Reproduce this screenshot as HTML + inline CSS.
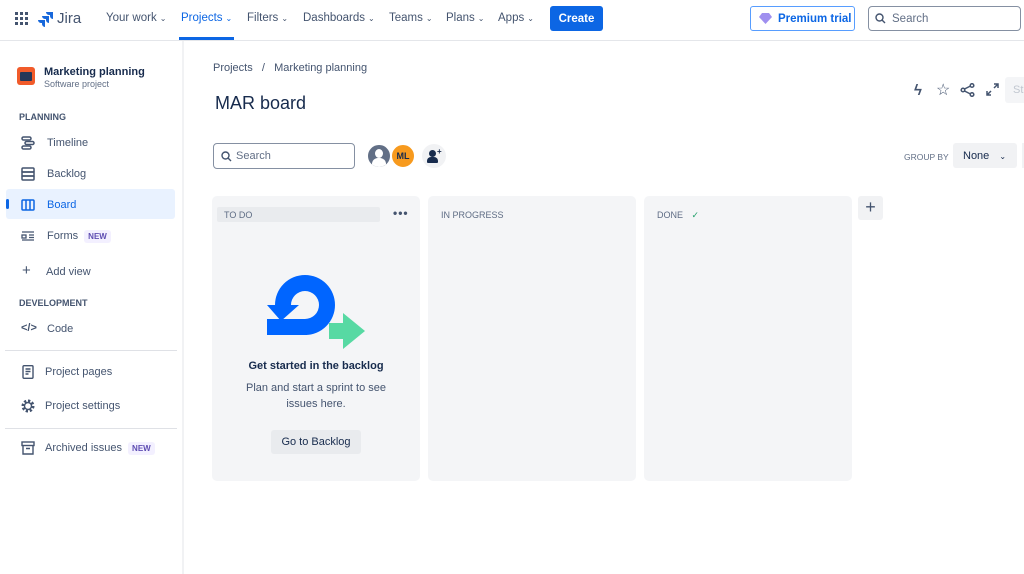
<!DOCTYPE html>
<html><head><meta charset="utf-8"><style>
*{box-sizing:border-box;margin:0;padding:0}
body{width:1024px;height:574px;overflow:hidden;background:#fff;font-family:"Liberation Sans",sans-serif;color:#172b4d;position:relative}
.a{position:absolute}
.nav{font-size:11.5px;color:#44546f;top:12px}
.car{font-size:8px;margin-left:3px}
.side{font-size:11px;color:#44546f}
.ico{position:absolute;left:21px;width:14px;height:14px}
.col{position:absolute;top:196px;width:208px;height:285px;background:#f4f5f7;border-radius:5px}
.ch{position:absolute;top:14px;font-size:9px;color:#5e6c84}
.badge{background:#f3f0ff;color:#5e4db2;font-size:8px;font-weight:bold;padding:2px 4px;border-radius:3px;margin-left:6px}
</style></head><body>
<div class="a" style="left:0;top:40px;width:1024px;height:1px;background:#e4e6ea"></div>
<svg class="a" style="left:15px;top:12px" width="13" height="13"><g fill="#44546f"><rect x="0" y="0" width="3" height="3"/><rect x="5" y="0" width="3" height="3"/><rect x="10" y="0" width="3" height="3"/><rect x="0" y="5" width="3" height="3"/><rect x="5" y="5" width="3" height="3"/><rect x="10" y="5" width="3" height="3"/><rect x="0" y="10" width="3" height="3"/><rect x="5" y="10" width="3" height="3"/><rect x="10" y="10" width="3" height="3"/></g></svg>
<svg class="a" style="left:38px;top:11px" width="16" height="16"><path d="M15 1H8a3 3 0 0 0 3 3h1v1a3 3 0 0 0 3 3z" fill="#1868db"/><path d="M11 5H4a3 3 0 0 0 3 3h1v1a3 3 0 0 0 3 3z" fill="#1868db"/><path d="M7 9H0a3 3 0 0 0 3 3h1v1a3 3 0 0 0 3 3z" fill="#1868db"/></svg>
<div class="a" style="left:57px;top:10px;font-size:15px;color:#44546f">Jira</div>
<div class="a nav" style="left:106px">Your work<span class="car">⌄</span></div>
<div class="a nav" style="left:181px;color:#0c66e4">Projects<span class="car">⌄</span></div>
<div class="a" style="left:179px;top:37px;width:55px;height:3px;background:#0c66e4"></div>
<div class="a nav" style="left:247px">Filters<span class="car">⌄</span></div>
<div class="a nav" style="left:303px">Dashboards<span class="car">⌄</span></div>
<div class="a nav" style="left:389px">Teams<span class="car">⌄</span></div>
<div class="a nav" style="left:446px">Plans<span class="car">⌄</span></div>
<div class="a nav" style="left:498px">Apps<span class="car">⌄</span></div>
<div class="a" style="left:550px;top:6px;width:53px;height:25px;background:#0c66e4;border-radius:3px;color:#fff;font-size:11.5px;font-weight:bold;text-align:center;line-height:26px">Create</div>
<div class="a" style="left:750px;top:6px;width:105px;height:25px;border:1px solid #579dff;border-radius:3px;color:#0c66e4;font-size:11.5px;font-weight:bold;line-height:24px;padding-left:27px">Premium trial</div>
<svg class="a" style="left:759px;top:13px" width="13" height="11"><path d="M3 0h7l3 4-6.5 7L0 4z" fill="#9f8fef"/></svg>
<div class="a" style="left:868px;top:6px;width:153px;height:25px;border:1px solid #8590a2;border-radius:4px;color:#626f86;font-size:11.5px;line-height:24px;padding-left:23px">Search</div>
<svg class="a" style="left:875px;top:13px" width="11" height="11"><circle cx="4.5" cy="4.5" r="3.5" stroke="#44546f" stroke-width="1.4" fill="none"/><path d="M7 7l3 3" stroke="#44546f" stroke-width="1.4"/></svg>
<div class="a" style="left:182px;top:41px;width:2px;height:533px;background:#f1f2f4"></div>
<div class="a" style="left:17px;top:67px;width:18px;height:18px;background:#f15b2a;border-radius:3px"></div>
<div class="a" style="left:20px;top:72px;width:12px;height:9px;background:#253858;border-radius:1px"></div>
<div class="a" style="left:44px;top:66px;font-size:11px;font-weight:bold">Marketing planning</div>
<div class="a" style="left:44px;top:79px;font-size:9px;color:#626f86">Software project</div>
<div class="a" style="left:19px;top:112px;font-size:9px;font-weight:bold;color:#44546f">PLANNING</div>
<div class="a" style="left:6px;top:189px;width:169px;height:30px;background:#e9f2ff;border-radius:3px"></div>
<div class="a" style="left:6px;top:199px;width:3px;height:10px;background:#0c66e4;border-radius:2px"></div>
<svg class="ico" style="top:136px" viewBox="0 0 14 14" fill="none" stroke="#44546f" stroke-width="1.5"><rect x="1" y="1" width="9" height="3" rx="1.5"/><rect x="4" y="5.5" width="9" height="3" rx="1.5"/><rect x="1" y="10" width="9" height="3" rx="1.5"/></svg>
<div class="a side" style="left:47px;top:137px">Timeline</div>
<svg class="ico" style="top:167px" viewBox="0 0 14 14" fill="none" stroke="#44546f" stroke-width="1.5"><rect x="1" y="1" width="12" height="4" rx="1"/><rect x="1" y="5" width="12" height="4"/><rect x="1" y="9" width="12" height="4" rx="1"/></svg>
<div class="a side" style="left:47px;top:168px">Backlog</div>
<svg class="ico" style="top:198px" viewBox="0 0 14 14" fill="none" stroke="#0c66e4" stroke-width="1.5"><rect x="1" y="2" width="12" height="10" rx="1"/><path d="M5 2v10M9 2v10"/></svg>
<div class="a side" style="left:47px;top:199px;color:#0c66e4">Board</div>
<svg class="ico" style="top:229px" viewBox="0 0 14 14" fill="none" stroke="#44546f" stroke-width="1.3"><path d="M1 3h12M1 11h12M8 6h5M8 8.5h5"/><rect x="1" y="6" width="4" height="3"/></svg>
<div class="a side" style="left:47px;top:230px">Forms<span class="badge">NEW</span></div>
<div class="a" style="left:22px;top:262px;font-size:15px;color:#44546f">+</div>
<div class="a side" style="left:46px;top:266px">Add view</div>
<div class="a" style="left:19px;top:298px;font-size:9px;font-weight:bold;color:#44546f">DEVELOPMENT</div>
<div class="a" style="left:21px;top:322px;font-size:11px;color:#44546f;font-weight:bold">&lt;/&gt;</div>
<div class="a side" style="left:47px;top:323px">Code</div>
<div class="a" style="left:5px;top:350px;width:172px;height:1px;background:#dfe1e6"></div>
<svg class="ico" style="top:365px" viewBox="0 0 14 14" fill="none" stroke="#44546f" stroke-width="1.4"><rect x="2" y="0.7" width="10" height="12.6" rx="1"/><path d="M4.5 4h5M4.5 6.5h5M4.5 9h3"/></svg>
<div class="a side" style="left:45px;top:366px">Project pages</div>
<svg class="ico" style="top:399px" viewBox="0 0 14 14"><circle cx="7" cy="7" r="5" fill="none" stroke="#44546f" stroke-width="3" stroke-dasharray="2.2 1.7"/><circle cx="7" cy="7" r="3.5" fill="none" stroke="#44546f" stroke-width="1.4"/></svg>
<div class="a side" style="left:45px;top:400px">Project settings</div>
<div class="a" style="left:5px;top:428px;width:172px;height:1px;background:#dfe1e6"></div>
<svg class="ico" style="top:441px" viewBox="0 0 14 14" fill="none" stroke="#44546f" stroke-width="1.4"><rect x="1" y="1" width="12" height="3.5"/><path d="M2 4.5v8.5h10V4.5M5 7.5h4"/></svg>
<div class="a side" style="left:45px;top:442px">Archived issues<span class="badge">NEW</span></div>
<div class="a" style="left:213px;top:62px;font-size:11px;color:#44546f">Projects &nbsp;&nbsp;/&nbsp;&nbsp; Marketing planning</div>
<div class="a" style="left:215px;top:93px;font-size:18px;font-weight:500">MAR board</div>
<div class="a" style="left:914px;top:82px;font-size:15px;color:#44546f;font-weight:bold">ϟ</div>
<div class="a" style="left:936px;top:80px;font-size:16px;color:#44546f">☆</div>
<svg class="a" style="left:960px;top:83px" width="15" height="14" fill="none" stroke="#44546f" stroke-width="1.5"><circle cx="12" cy="2.5" r="1.8"/><circle cx="3" cy="7" r="1.8"/><circle cx="12" cy="11.5" r="1.8"/><path d="M4.5 6l6-3M4.5 8l6 3"/></svg>
<svg class="a" style="left:986px;top:83px" width="13" height="13" fill="none" stroke="#44546f" stroke-width="1.5"><path d="M8 1h4v4M12 1L8 5M5 12H1V8M1 12l4-4"/></svg>
<div class="a" style="left:1005px;top:77px;width:25px;height:26px;background:#f4f5f7;border-radius:3px;color:#c1c7d0;font-size:11px;line-height:26px;padding-left:8px">St</div>
<div class="a" style="left:213px;top:143px;width:142px;height:26px;border:1px solid #8590a2;border-radius:4px;color:#626f86;font-size:11px;line-height:25px;padding-left:22px">Search</div>
<svg class="a" style="left:221px;top:151px" width="11" height="11"><circle cx="4.5" cy="4.5" r="3.5" stroke="#44546f" stroke-width="1.4" fill="none"/><path d="M7 7l3 3" stroke="#44546f" stroke-width="1.4"/></svg>
<div class="a" style="left:366px;top:143px;width:26px;height:26px;border-radius:50%;background:#626f86;border:2px solid #fff;overflow:hidden"><div class="a" style="left:7px;top:4px;width:8px;height:9px;border-radius:50%;background:#fff"></div><div class="a" style="left:4px;top:13px;width:14px;height:10px;border-radius:6px 6px 0 0;background:#fff"></div></div>
<div class="a" style="left:390px;top:143px;width:26px;height:26px;border-radius:50%;background:#f79a1e;border:2px solid #fff;font-size:9px;font-weight:bold;line-height:22px;text-align:center">ML</div>
<div class="a" style="left:422px;top:144px;width:24px;height:24px;border-radius:50%;background:#f1f2f4"></div>
<div class="a" style="left:429px;top:150px;width:7px;height:7px;border-radius:50%;background:#172b4d"></div>
<div class="a" style="left:427px;top:157px;width:11px;height:6px;border-radius:4px 4px 1px 1px;background:#172b4d"></div>
<div class="a" style="left:437px;top:147px;font-size:8px;font-weight:bold">+</div>
<div class="a" style="left:904px;top:152px;font-size:8.5px;color:#626f86">GROUP BY</div>
<div class="a" style="left:953px;top:143px;width:64px;height:25px;background:#f1f2f4;border-radius:3px;font-size:11px;font-weight:500;line-height:26px;padding-left:10px">None <span style="font-size:8px;margin-left:7px">⌄</span></div>
<div class="a" style="left:1022px;top:143px;width:2px;height:25px;background:#f1f2f4"></div>
<div class="col" style="left:212px">
 <div class="a" style="left:5px;top:11px;width:163px;height:15px;background:#e9ebee;border-radius:2px"></div>
 <div class="ch" style="left:12px">TO DO</div>
 <div class="a" style="left:181px;top:10px;font-size:12px;font-weight:bold;color:#44546f;letter-spacing:1px">•••</div>
 <svg class="a" style="left:55px;top:75px" width="100" height="80" viewBox="0 0 100 80">
  <defs><linearGradient id="g" x1="0" x2="1"><stop offset="0" stop-color="#0065ff" stop-opacity="0"/><stop offset=".6" stop-color="#0065ff"/></linearGradient></defs>
  <path d="M62 52h14V42l22 18-22 18V68H62z" fill="#57d9a3"/>
  <path d="M38 4a30 30 0 0 1 0 60H0V48h38a14 14 0 1 0-14-14h8L14 50 0 34h8A30 30 0 0 1 38 4z" fill="#0065ff"/>
  <rect x="0" y="48" width="40" height="16" fill="url(#g)"/>
 </svg>
 <div class="a" style="left:0;width:208px;top:164px;text-align:center;font-size:11px;font-weight:bold">Get started in the backlog</div>
 <div class="a" style="left:0;width:208px;top:185px;text-align:center;font-size:11px;color:#44546f;line-height:15.5px">Plan and start a sprint to see<br>issues here.</div>
 <div class="a" style="left:59px;top:234px;width:90px;height:24px;background:#e9ebee;border-radius:3px;font-size:11px;text-align:center;line-height:24px;font-weight:500">Go to Backlog</div>
</div>
<div class="col" style="left:428px"><div class="ch" style="left:13px">IN PROGRESS</div></div>
<div class="col" style="left:644px"><div class="ch" style="left:13px">DONE <span style="color:#22a06b;margin-left:6px">✓</span></div></div>
<div class="a" style="left:858px;top:196px;width:25px;height:24px;background:#f1f2f4;border-radius:3px;font-size:18px;color:#44546f;text-align:center;line-height:23px">+</div>
</body></html>
